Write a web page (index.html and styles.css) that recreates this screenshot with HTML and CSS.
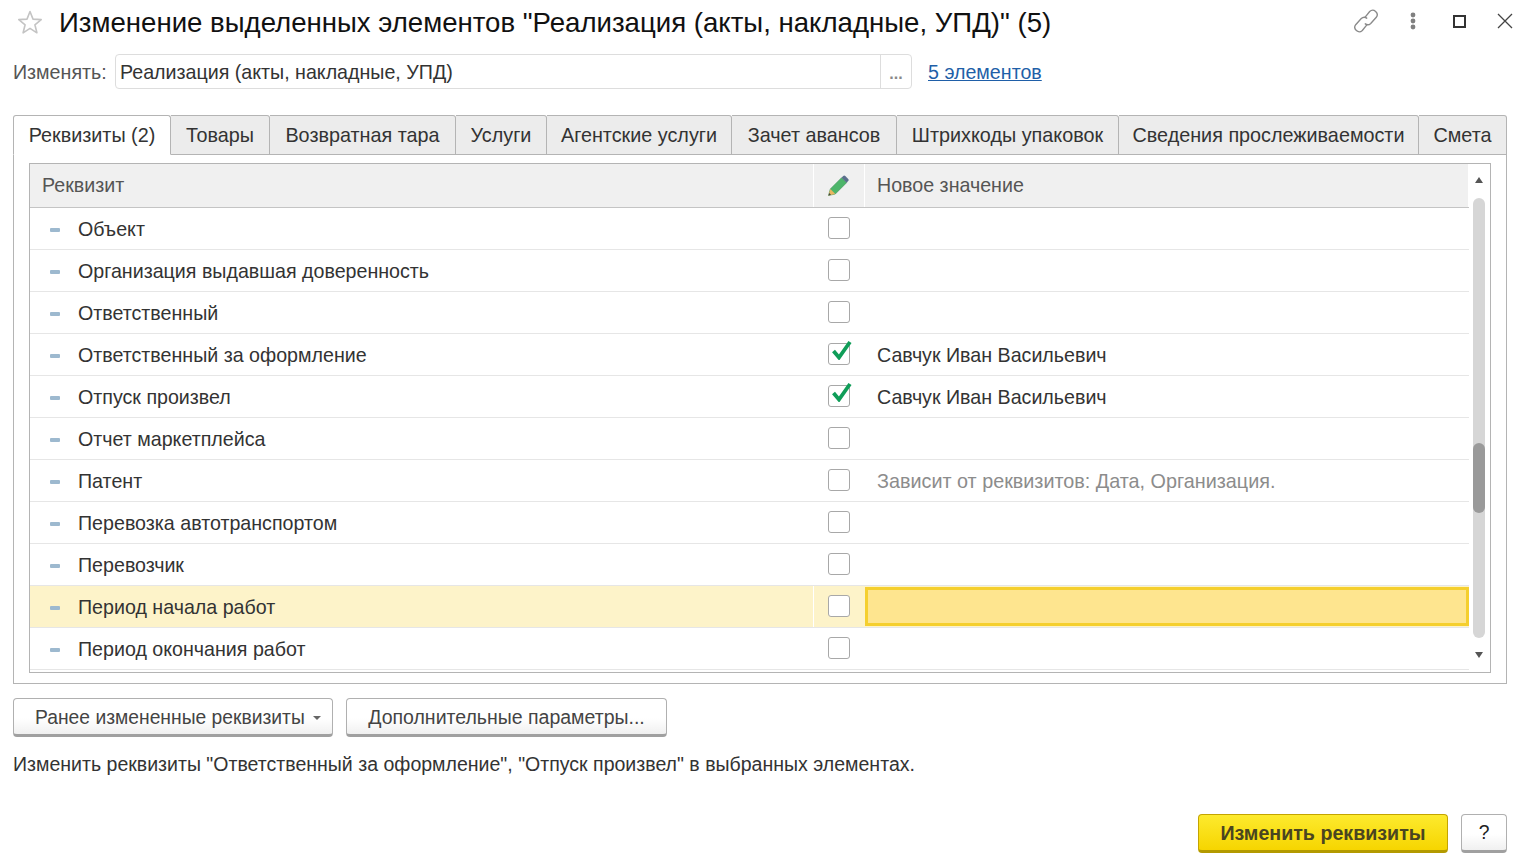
FILE: index.html
```html
<!DOCTYPE html>
<html lang="ru">
<head>
<meta charset="utf-8">
<title>Изменение выделенных элементов</title>
<link rel="stylesheet" href="styles.css">
</head>
<body>
<div class="page">
  <header class="titlebar">
    <svg class="star" width="26" height="26" viewBox="0 0 26 26"><path d="M13 2.500l3 7.600 8.200.5-6.300 5.200 2 8-6.900-4.400-6.900 4.400 2-8-6.300-5.200 8.200-.5z" fill="#fff" stroke="#c4c4c4" stroke-width="1.600" stroke-linejoin="round"/></svg>
    <h1 class="title">Изменение выделенных элементов "Реализация (акты, накладные, УПД)" (5)</h1>
    <div class="winctl">
      <svg class="ico-link" width="26" height="26" viewBox="0 0 26 26" fill="none" stroke="#8a8a8a" stroke-width="1.300" stroke-linecap="round"><path d="M12 9.500l4.500-5.500a4.200 4.200 0 0 1 6.300 5.500l-5.300 5.800a4 4 0 0 1-5.200.4"/><path d="M14 16.500l-4.500 5.500a4.200 4.200 0 0 1-6.300-5.500l5.300-5.800a4 4 0 0 1 5.200-.4"/></svg>
      <svg class="ico-more" width="6" height="18" viewBox="0 0 6 18" fill="#808080"><circle cx="3" cy="3" r="2.400"/><circle cx="3" cy="9" r="2.400"/><circle cx="3" cy="15" r="2.400"/></svg>
      <span class="ico-max"></span>
      <svg class="ico-close" width="16" height="16" viewBox="0 0 16 16" stroke="#444" stroke-width="1.300"><path d="M1 1l14 14M15 1L1 15"/></svg>
    </div>
  </header>

  <div class="objrow">
    <span class="objlabel">Изменять:</span>
    <div class="objfield"><span class="objvalue">Реализация (акты, накладные, УПД)</span><span class="objbtn">...</span></div>
    <a class="objlink" href="#">5 элементов</a>
  </div>

  <nav class="tabs">
    <span class="tab active">Реквизиты (2)</span>
    <span class="tab">Товары</span>
    <span class="tab">Возвратная тара</span>
    <span class="tab">Услуги</span>
    <span class="tab">Агентские услуги</span>
    <span class="tab">Зачет авансов</span>
    <span class="tab">Штрихкоды упаковок</span>
    <span class="tab">Сведения прослеживаемости</span>
    <span class="tab">Смета</span>
  </nav>

  <section class="panel">
    <div class="grid">
      <div class="table">
        <div class="thead">
          <div class="th">Реквизит</div>
          <div class="th th-c"><svg width="22" height="22" viewBox="0 0 22 22"><path d="M1.500 20.500l1.800-6.500L14.600 2.700l5 5L8.300 19z" fill="#4db56a" stroke="#3f8f58" stroke-width=".6"/><path d="M14.600 2.700l1.600-1.600a1.500 1.500 0 0 1 2.100 0l2.900 2.900a1.500 1.500 0 0 1 0 2.100l-1.600 1.600z" fill="#5a6f8c"/><path d="M1.500 20.500l1.800-6.500 5 5z" fill="#e9b661"/><path d="M1.500 20.500l.7-2.600 1.900 1.900z" fill="#444"/></svg></div>
          <div class="th">Новое значение</div>
        </div>
        <div class="row"><div class="td"><i class="dash"></i>Объект</div><div class="td-c"><span class="cb"></span></div><div class="tv"></div></div>
        <div class="row"><div class="td"><i class="dash"></i>Организация выдавшая доверенность</div><div class="td-c"><span class="cb"></span></div><div class="tv"></div></div>
        <div class="row"><div class="td"><i class="dash"></i>Ответственный</div><div class="td-c"><span class="cb"></span></div><div class="tv"></div></div>
        <div class="row"><div class="td"><i class="dash"></i>Ответственный за оформление</div><div class="td-c"><span class="cb"><svg class="tick" width="24" height="24" viewBox="0 0 24 24"><path d="M5.500 15l5.500 6.500L22 6" fill="none" stroke="#0f9d58" stroke-width="3.800"/></svg></span></div><div class="tv">Савчук Иван Васильевич</div></div>
        <div class="row"><div class="td"><i class="dash"></i>Отпуск произвел</div><div class="td-c"><span class="cb"><svg class="tick" width="24" height="24" viewBox="0 0 24 24"><path d="M5.500 15l5.500 6.500L22 6" fill="none" stroke="#0f9d58" stroke-width="3.800"/></svg></span></div><div class="tv">Савчук Иван Васильевич</div></div>
        <div class="row"><div class="td"><i class="dash"></i>Отчет маркетплейса</div><div class="td-c"><span class="cb"></span></div><div class="tv"></div></div>
        <div class="row"><div class="td"><i class="dash"></i>Патент</div><div class="td-c"><span class="cb"></span></div><div class="tv hint">Зависит от реквизитов: Дата, Организация.</div></div>
        <div class="row"><div class="td"><i class="dash"></i>Перевозка автотранспортом</div><div class="td-c"><span class="cb"></span></div><div class="tv"></div></div>
        <div class="row"><div class="td"><i class="dash"></i>Перевозчик</div><div class="td-c"><span class="cb"></span></div><div class="tv"></div></div>
        <div class="row selected"><div class="td"><i class="dash"></i>Период начала работ</div><div class="td-c"><span class="cb"></span></div><div class="tv focus"></div></div>
        <div class="row"><div class="td"><i class="dash"></i>Период окончания работ</div><div class="td-c"><span class="cb"></span></div><div class="tv"></div></div>
      </div>
      <div class="scroll">
        <span class="arrow up"></span>
        <div class="track"><div class="thumb"></div></div>
        <span class="arrow down"></span>
      </div>
    </div>
  </section>

  <div class="actions">
    <button class="btn btn-menu">Ранее измененные реквизиты<i class="caret"></i></button>
    <button class="btn btn-more">Дополнительные параметры...</button>
  </div>

  <p class="summary">Изменить реквизиты "Ответственный за оформление", "Отпуск произвел" в выбранных элементах.</p>

  <footer class="footer">
    <button class="btn-primary">Изменить реквизиты</button>
    <button class="btn btn-help">?</button>
  </footer>
</div>
</body>
</html>
```

FILE: styles.css
```css
* { box-sizing: border-box; }
html, body { margin: 0; padding: 0; background: #fff; }
body { font-family: "Liberation Sans", Arial, sans-serif; font-size: 19.650px; color: #333; overflow: hidden; }
.page { width: 1523px; height: 868px; padding: 0 16px 0 13px; display: flex; flex-direction: column; }

.titlebar { height: 46px; display: flex; align-items: center; }
.star { margin: -2px 0 0 4px; flex: none; }
.title { margin: 0 0 0 16px; font-size: 27.600px; font-weight: 400; color: #111; white-space: nowrap; }
.winctl { margin: -4px -8px 0 auto; display: flex; align-items: center; }
.ico-link { margin-right: 31px; transform: scale(1.050); }
.ico-more { margin-right: 37px; }
.ico-max { width: 13px; height: 13px; border: 2px solid #333; margin-right: 31px; }
.ico-close { margin-right: 2px; }

.objrow { height: 35px; margin-top: 8px; display: flex; align-items: center; }
.objlabel { color: #555; width: 102px; padding-top: 2px; }
.objfield { width: 797px; height: 35px; border: 1px solid #ddd; border-radius: 4px; display: flex; align-items: center; }
.objvalue { flex: 1; padding: 2px 0 0 4px; color: #333; }
.objbtn { width: 31px; height: 33px; border-left: 1px solid #ddd; text-align: center; color: #888; line-height: 38px; font-size: 16px; font-weight: 700; }
.objlink { margin-left: 16px; padding-top: 2px; color: #1f5fa8; text-decoration: underline; }

.tabs { margin-top: 26px; height: 40px; display: grid; grid-template-columns: 158px 99px 186px 91px 185px 165px 222px 300px 88px; position: relative; z-index: 1; }
.tab { height: 40px; background: #ececec; border: 1px solid #b4b4b4; border-left: 0; border-radius: 0 3px 0 0; display: flex; align-items: center; justify-content: center; white-space: nowrap; color: #333; font-size: 19.800px; }
.tab.active { background: #fff; border-left: 1px solid #b4b4b4; border-bottom-color: #fff; border-radius: 3px 3px 0 0; }

.panel { height: 530px; margin-top: -1px; border: 1px solid #b4b4b4; padding: 8px 15px 10px; }
.grid { height: 510px; border: 1px solid #b4b4b4; display: flex; overflow: hidden; }
.table { width: 1439px; flex: none; overflow: hidden; }
.thead { height: 44px; display: grid; grid-template-columns: 784px 51px 1fr; background: #f0f0f0; border-bottom: 1px solid #c4c4c4; }
.th { color: #555; padding-left: 12px; display: flex; align-items: center; border-right: 1px solid #fff; }
.th-c { justify-content: center; padding: 0 2px 0 0; }
.row { height: 42px; display: grid; grid-template-columns: 784px 51px 1fr; border-bottom: 1px solid #e6e6e6; }
.td { display: flex; align-items: center; padding: 2px 0 0 20px; color: #333; }
.dash { width: 10px; height: 4px; border-radius: 1px; background: #9db9cf; margin-right: 18px; flex: none; }
.td-c { display: flex; align-items: center; justify-content: center; padding: 0 2px 1px 0; }
.cb { width: 22px; height: 22px; border: 1px solid #a8a8a8; border-radius: 3px; background: #fff; position: relative; display: block; }
.tick { position: absolute; left: -1px; top: -8px; }
.tv { padding: 2px 0 0 12px; display: flex; align-items: center; color: #333; }
.hint { color: #8c8c8c; font-size: 19.800px; }
.selected { background: #fdf3c9; }
.selected .td { border-right: 1px solid #fff; }
.focus { background: #fee58f; border: 3px solid #f5cf2e; margin: 1px 0 1px; }

.scroll { flex: 1; display: flex; flex-direction: column; align-items: center; padding: 13px 0 14px; }
.arrow { width: 0; height: 0; border-left: 4px solid transparent; border-right: 4px solid transparent; flex: none; margin-right: 1px; }
.arrow.up { border-bottom: 6px solid #555; margin-bottom: 15px; }
.arrow.down { border-top: 6px solid #555; margin-top: auto; }
.track { width: 12px; height: 440px; background: #d6d6d6; border-radius: 6px; position: relative; margin-right: 1px; }
.thumb { position: absolute; left: 0; top: 245px; width: 12px; height: 70px; background: #9a9a9a; border-radius: 6px; }

.actions { margin-top: 14px; display: flex; gap: 13px; }
.btn { height: 39px; font: inherit; font-size: 19.300px; color: #444; background: linear-gradient(#fff 55%, #f0f0f0); border: 1px solid #b0b0b0; border-bottom: 3px solid #a0a0a0; border-radius: 4px; display: flex; align-items: center; white-space: nowrap; padding: 2px 0 0; }
.btn-menu { width: 320px; padding-left: 21px; }
.btn-more { width: 321px; justify-content: center; font-size: 19.500px; }
.caret { width: 0; height: 0; margin-left: 8px; margin-top: 1px; border-left: 4px solid transparent; border-right: 4px solid transparent; border-top: 4px solid #666; }
.summary { margin: 16px 0 0; height: 23px; line-height: 23px; font-size: 19.550px; color: #333; white-space: nowrap; }

.footer { margin-top: auto; margin-bottom: 15px; display: flex; justify-content: flex-end; gap: 13px; }
.btn-primary { width: 250px; height: 39px; font: inherit; font-weight: 700; color: #4a4520; background: linear-gradient(#fdea2e, #f6d500); border: 1px solid #c4a400; border-bottom: 3px solid #b39a00; border-radius: 4px; padding: 2px 0 0; }
.btn-help { width: 46px; padding: 0; justify-content: center; color: #222; }
```
